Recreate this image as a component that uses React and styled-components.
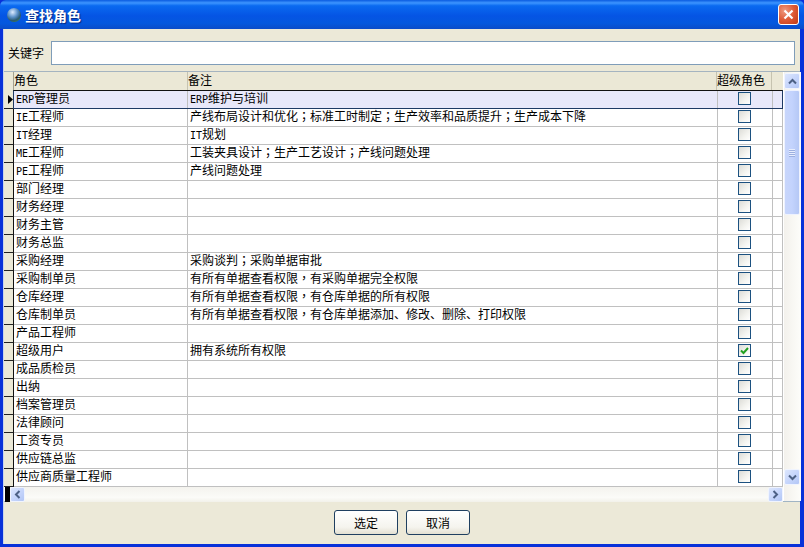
import React from 'react';
import styled, { createGlobalStyle } from 'styled-components';

const CJK = '"Noto Sans CJK SC", "Liberation Sans", sans-serif';

const Global = createGlobalStyle`
  html, body { margin: 0; padding: 0; background: #0A3BC4; }
  * { box-sizing: border-box; }
`;

const Win = styled.div`
  width: 804px; height: 547px; display: flex; flex-direction: column;
  font: 12px/16px ${CJK}; color: #000; overflow: hidden;
  background: #0831D9;
`;
const TitleBar = styled.div`
  height: 29px; flex: none; display: flex; align-items: center; padding: 0 5px 0 6px; gap: 3px;
  border-radius: 6px 6px 0 0;
  background: linear-gradient(180deg, #0A5BE0 0%, #3D95FF 10%, #0A6AF0 20%, #0554E4 55%, #0458DE 80%, #0A4CC8 100%);
`;
const TitleText = styled.div`
  flex: 1; color: #fff; font-weight: 700; font-size: 14px; text-shadow: 1px 1px 1px #0A2A80;
`;
const CloseBtn = styled.div`
  width: 21px; height: 21px; border: 1px solid #fff; border-radius: 3px; display: flex; align-items: center; justify-content: center;
  background: radial-gradient(circle at 30% 30%, #EE9A80 0%, #DE5A36 50%, #BF3A14 100%);
`;
const Client = styled.div`
  flex: 1; min-height: 0; display: flex; flex-direction: column; margin: 0 4px 3px 3px; background: #ECE9D8;
  border-left: 1px solid #C8D4EA;
`;
const SearchRow = styled.div`
  height: 42px; flex: none; display: flex; align-items: flex-start; padding: 12px 5px 0 4px;
`;
const SearchLabel = styled.label`
  width: 43px; flex: none; line-height: 24px;
`;
const SearchInput = styled.div`
  flex: 1; height: 24px; background: #fff; border: 1px solid #7F9DB9;
`;
const Grid = styled.div`
  height: 431px; flex: none; display: flex; background: #fff; border-top: 1px solid #A5B4C0; border-bottom: 1px solid #A0B4C4;
`;
const TableArea = styled.div`
  width: 779px; flex: none; display: flex; flex-direction: column;
`;
const HeaderRow = styled.div`
  height: 19px; flex: none; display: flex; background: #EBE8D6;
`;
const Indicator = styled.div`
  width: 10px; flex: none; background: #EBE8D6;
  border-right: 1px solid ${p => (p.$row ? '#111' : '#A5A290')};
  ${p => p.$row && 'border-bottom: 1px solid #222;'}
  display: flex; align-items: center; justify-content: flex-end;
`;
const HeaderCell = styled.div`
  width: ${p => p.$w}px; flex: none; height: 18px; border-right: 1px solid #C6C3B0; line-height: 15px;
  white-space: nowrap;
`;
const Row = styled.div`
  height: 18px; flex: none; display: flex; position: relative;
`;
const Cell = styled.div`
  width: ${p => p.$w}px; flex: none; height: 18px; padding-left: 2px; line-height: 14px; white-space: nowrap;
  border-right: 1px solid #C0C0C0; border-bottom: 1px solid #C0C0C0;
  background: ${p => (p.$sel ? '#E8E8FA' : '#fff')};
  ${p => p.$center && 'display: flex; align-items: center; justify-content: center; padding: 0 2px 2px 0;'}
`;
const SelectOutline = styled.div`
  position: absolute; left: 9px; top: -1px; width: 770px; height: 19px; border: 1px solid #1E3A64; border-top-color: #111; pointer-events: none;
`;
const Latin = styled.span`
  font-family: "DejaVu Sans Mono", monospace; font-size: 10px;
`;
const Punct = styled.span`
  font-family: "Noto Sans CJK TC", sans-serif;
`;
const Check = styled.div`
  width: 13px; height: 13px; border: 1px solid #1C5180; display: flex; align-items: center; justify-content: center;
  background: linear-gradient(135deg, #DCDCD7 0%, #F4F4F0 60%, #FFFFFF 100%);
`;
const HScroll = styled.div`
  height: 15px; flex: none; display: flex; margin-left: 1px;
  background: linear-gradient(180deg, #F4F3EE 0%, #FBFBF8 70%, #F2F1EA 100%);
`;
const BlackTab = styled.div`
  width: 5px; flex: none; background: #000;
`;
const HSpacer = styled.div`
  flex: 1;
`;
const VScroll = styled.div`
  width: 17px; flex: none; margin-left: 1px; display: flex; flex-direction: column; padding-top: 1px;
  background: linear-gradient(90deg, #F3F1EC 0%, #FDFDFA 100%);
`;
const ScrollBtn = styled.div`
  width: ${p => p.$w || 16}px; height: ${p => p.$h || 16}px; flex: none; display: flex; align-items: center; justify-content: center;
  background: linear-gradient(135deg, #DCE6FD 0%, #C3D3FB 60%, #B2C6F5 100%); border: 1px solid #F0F4FE; border-radius: 2px;
`;
const Thumb = styled.div`
  width: 16px; height: 125px; margin-top: 1px; flex: none; display: flex; flex-direction: column; align-items: center; justify-content: center; gap: 1px;
  background: linear-gradient(90deg, #C8D6FB 0%, #C3D3FD 50%, #B5C8F5 100%); border: 1px solid #EEF2FE; border-radius: 2px;
`;
const Grip = styled.div`
  width: 6px; height: 1px; background: #E8EEFE; box-shadow: 0 1px 0 #9DB0E0;
`;
const VFill = styled.div`
  flex: 1;
`;
const VBottomGap = styled.div`
  height: 16px; flex: none;
`;
const Footer = styled.div`
  flex: 1; display: flex; justify-content: center; gap: 8px; padding: 8px 0 0;
`;
const Button = styled.button`
  width: 64px; height: 25px; font: 12px ${CJK}; color: #000; padding: 0; border: 1px solid #1F3F60; border-radius: 3px;
  background: linear-gradient(180deg, #FFFFFF 0%, #F5F4EE 70%, #E3E0D2 100%);
`;

const COLS = [174, 530, 55, 10];
const HEAD = [174, 529, 55];
const ROWS = [
  ['ERP管理员', 'ERP维护与培训'],
  ['IE工程师', '产线布局设计和优化；标准工时制定；生产效率和品质提升；生产成本下降'],
  ['IT经理', 'IT规划'],
  ['ME工程师', '工装夹具设计；生产工艺设计；产线问题处理'],
  ['PE工程师', '产线问题处理'],
  ['部门经理', ''],
  ['财务经理', ''],
  ['财务主管', ''],
  ['财务总监', ''],
  ['采购经理', '采购谈判；采购单据审批'],
  ['采购制单员', '有所有单据查看权限，有采购单据完全权限'],
  ['仓库经理', '有所有单据查看权限，有仓库单据的所有权限'],
  ['仓库制单员', '有所有单据查看权限，有仓库单据添加、修改、删除、打印权限'],
  ['产品工程师', ''],
  ['超级用户', '拥有系统所有权限', true],
  ['成品质检员', ''],
  ['出纳', ''],
  ['档案管理员', ''],
  ['法律顾问', ''],
  ['工资专员', ''],
  ['供应链总监', ''],
  ['供应商质量工程师', ''],
];

const Mixed = ({ text }) =>
  text.split(/([A-Z]+|[；，])/).map((part, i) => {
    if (/^[A-Z]+$/.test(part)) return <Latin key={i}>{part}</Latin>;
    if (/^[；，]$/.test(part)) return <Punct key={i}>{part}</Punct>;
    return part;
  });

const Arrow = ({ d }) => (
  <svg width="9" height="7" viewBox="0 0 9 7"><path d={d} fill="none" stroke="#4D6185" strokeWidth="2" /></svg>
);
const ArrowV = ({ d }) => (
  <svg width="7" height="9" viewBox="0 0 7 9"><path d={d} fill="none" stroke="#4D6185" strokeWidth="2" /></svg>
);

export default function App() {
  return (
    <Win>
      <Global />
      <TitleBar>
        <svg width="16" height="16" viewBox="0 0 16 16">
          <defs>
            <radialGradient id="g" cx="0.4" cy="0.3" r="0.8">
              <stop offset="0" stopColor="#DCEBFF" />
              <stop offset="0.45" stopColor="#5A90C8" />
              <stop offset="0.75" stopColor="#2A5A70" />
              <stop offset="1" stopColor="#4A8A3A" />
            </radialGradient>
          </defs>
          <circle cx="8" cy="8" r="7" fill="url(#g)" />
        </svg>
        <TitleText>查找角色</TitleText>
        <CloseBtn>
          <svg width="11" height="11" viewBox="0 0 11 11"><path d="M1.5 1.5l8 8M9.5 1.5l-8 8" stroke="#fff" strokeWidth="2.2" /></svg>
        </CloseBtn>
      </TitleBar>
      <Client>
        <SearchRow>
          <SearchLabel>关键字</SearchLabel>
          <SearchInput />
        </SearchRow>
        <Grid>
          <TableArea>
            <HeaderRow>
              <Indicator />
              <HeaderCell $w={HEAD[0]}>角色</HeaderCell>
              <HeaderCell $w={HEAD[1]}>备注</HeaderCell>
              <HeaderCell $w={HEAD[2]}>超级角色</HeaderCell>
            </HeaderRow>
            {ROWS.map(([name, note, checked], i) => (
              <Row key={name}>
                <Indicator $row>
                  {i === 0 && (
                    <svg width="5" height="9" viewBox="0 0 5 9"><path d="M0 0l5 4.5L0 9z" fill="#000" /></svg>
                  )}
                </Indicator>
                <Cell $w={COLS[0]} $sel={i === 0}><Mixed text={name} /></Cell>
                <Cell $w={COLS[1]} $sel={i === 0}><Mixed text={note} /></Cell>
                <Cell $w={COLS[2]} $sel={i === 0} $center>
                  <Check>
                    {checked && (
                      <svg width="9" height="9" viewBox="0 0 9 9"><path d="M1 4.5l2.5 2.5L8 2" fill="none" stroke="#21A121" strokeWidth="2" /></svg>
                    )}
                  </Check>
                </Cell>
                <Cell $w={COLS[3]} $sel={i === 0} />
                {i === 0 && <SelectOutline />}
              </Row>
            ))}
            <HScroll>
              <BlackTab />
              <ScrollBtn $w={15} $h={15}><ArrowV d="M5.5 1L2 4.5 5.5 8" /></ScrollBtn>
              <HSpacer />
              <ScrollBtn $w={15} $h={15}><ArrowV d="M1.5 1L5 4.5 1.5 8" /></ScrollBtn>
            </HScroll>
          </TableArea>
          <VScroll>
            <ScrollBtn $h={16}><Arrow d="M1 5.5L4.5 2 8 5.5" /></ScrollBtn>
            <Thumb><Grip /><Grip /><Grip /><Grip /></Thumb>
            <VFill />
            <ScrollBtn $h={16}><Arrow d="M1 1.5L4.5 5 8 1.5" /></ScrollBtn>
            <VBottomGap />
          </VScroll>
        </Grid>
        <Footer>
          <Button>选定</Button>
          <Button>取消</Button>
        </Footer>
      </Client>
    </Win>
  );
}
